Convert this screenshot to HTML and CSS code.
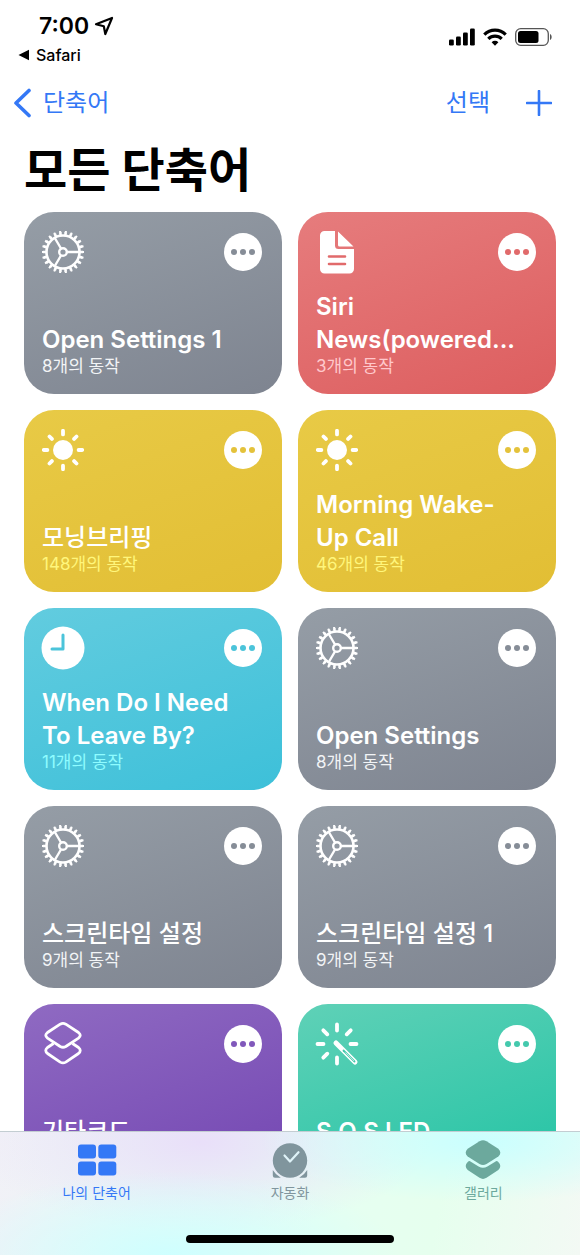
FILE: index.html
```html
<!DOCTYPE html>
<html lang="ko">
<head>
    <meta charset="UTF-8">
    <meta name="viewport" content="width=device-width, initial-scale=1.0">
    <title>모든 단축어</title>
    <link rel="stylesheet" href="styles.css">
</head>
<body>
    <!-- Iconos compartidos -->
    <svg class="sprite" aria-hidden="true">
        <symbol id="gear" viewBox="0 0 42 42">
            <g fill="none" stroke="#fff">
                <circle cx="21" cy="21" r="18.500" stroke-width="3" pathLength="44" stroke-dasharray="1 1" stroke-dashoffset="0.5"/>
                <circle cx="21" cy="21" r="20.300" stroke-width="2" pathLength="44" stroke-dasharray="0.7 1.3" stroke-dashoffset="0.350"/>
                <circle cx="21" cy="21" r="16.500" stroke-width="2.600"/>
                <circle cx="21" cy="21" r="3.800" stroke-width="2.400"/>
                <path d="M25 21h12M19 17.500l-6.500-11M19 24.500l-6.500 11" stroke-width="2.400"/>
            </g>
        </symbol>
        <symbol id="sun" viewBox="0 0 42 42">
            <circle cx="21" cy="21" r="10" fill="#fff"/>
            <path d="M21 1.800v3.600M21 36.600v3.600M1.800 21h3.600M36.600 21h3.600M7.500 7.500l2.400 2.400M32.100 32.100l2.400 2.400M34.500 7.500l-2.400 2.400M9.900 32.100l-2.400 2.400" stroke="#fff" stroke-width="3.800" stroke-linecap="round"/>
        </symbol>
        <symbol id="more" viewBox="0 0 38 38">
            <circle cx="19" cy="19" r="19" fill="#fff"/>
            <g fill="currentColor">
                <circle cx="10" cy="19" r="3"/>
                <circle cx="19" cy="19" r="3"/>
                <circle cx="28" cy="19" r="3"/>
            </g>
        </symbol>
    </svg>

    <div class="app">
        <div class="status">
            <div class="status-left">
                <div class="time">7:00
                    <svg width="20" height="20" viewBox="0 0 20 20"><path d="M2 8.200L18 2 11.300 18 9.800 10.200z" fill="none" stroke="#000" stroke-width="2.200" stroke-linejoin="round"/></svg>
                </div>
                <a class="return" href="#">
                    <svg width="12" height="12" viewBox="0 0 12 12"><path d="M0.500 6L11 0.700v10.600z"/></svg>
                    Safari
                </a>
            </div>
            <div class="status-right">
                <svg width="26" height="18" viewBox="0 0 26 18">
                    <rect x="0" y="11.500" width="4.800" height="6" rx="1.300"/>
                    <rect x="7" y="8.500" width="4.800" height="9" rx="1.300"/>
                    <rect x="14" y="4.500" width="4.800" height="13" rx="1.300"/>
                    <rect x="21" y="0.500" width="4.800" height="17" rx="1.300"/>
                </svg>
                <svg width="24" height="18" viewBox="0 0 24 18">
                    <g fill="none" stroke="#000" stroke-width="3.200">
                        <path d="M1.300 6.600a15.200 15.200 0 0 1 21.400 0"/>
                        <path d="M5.300 10.800a9.500 9.500 0 0 1 13.400 0"/>
                    </g>
                    <path d="M8.600 14.200a4.900 4.900 0 0 1 6.800 0L12 17.700z"/>
                </svg>
                <svg width="38" height="18" viewBox="0 0 38 18">
                    <rect x="0.700" y="0.700" width="32.600" height="16.600" rx="5" fill="none" stroke="#555" stroke-width="1.300"/>
                    <rect x="3" y="3" width="20.500" height="12" rx="2.500"/>
                    <path d="M35 6c2.200 1 2.200 5 0 6z" fill="#555"/>
                </svg>
            </div>
        </div>

        <nav class="nav">
            <a class="back" href="#">
                <svg width="18" height="30" viewBox="0 0 18 30"><path d="M16 2.500L3 15l13 12.500" fill="none" stroke="currentColor" stroke-width="3.600" stroke-linecap="round" stroke-linejoin="round"/></svg>
                단축어
            </a>
            <div class="nav-actions">
                <button type="button">선택</button>
                <button type="button" aria-label="추가">
                    <svg width="26" height="26" viewBox="0 0 26 26"><path d="M13 1v24M1 13h24" stroke="currentColor" stroke-width="2.600" stroke-linecap="round"/></svg>
                </button>
            </div>
        </nav>

        <h1>모든 단축어</h1>

        <main class="grid">
            <article class="card gray">
                <div class="card-top">
                    <svg class="icon"><use href="#gear"/></svg>
                    <button type="button" class="more" aria-label="편집"><svg><use href="#more"/></svg></button>
                </div>
                <div class="card-text">
                    <h2>Open Settings 1</h2>
                    <p>8개의 동작</p>
                </div>
            </article>

            <article class="card red">
                <div class="card-top">
                    <svg class="icon" viewBox="0 0 42 42">
                        <path d="M9 0h10v14.500a3.500 3.500 0 0 0 3.500 3.500H38v20a4.500 4.500 0 0 1-4.500 4.500h-25A4.500 4.500 0 0 1 4 38V4.500A4.500 4.500 0 0 1 8.500 0z" fill="#fff"/>
                        <path d="M22 0.500L37.500 15.500H23.500a1.500 1.500 0 0 1-1.500-1.500z" fill="#fff"/>
                        <path d="M13 25.500h16M13 33h16" stroke="currentColor" stroke-width="2.600" stroke-linecap="round"/>
                    </svg>
                    <button type="button" class="more" aria-label="편집"><svg><use href="#more"/></svg></button>
                </div>
                <div class="card-text">
                    <h2>Siri News(powered...</h2>
                    <p>3개의 동작</p>
                </div>
            </article>

            <article class="card yellow">
                <div class="card-top">
                    <svg class="icon"><use href="#sun"/></svg>
                    <button type="button" class="more" aria-label="편집"><svg><use href="#more"/></svg></button>
                </div>
                <div class="card-text">
                    <h2 class="ko">모닝브리핑</h2>
                    <p>148개의 동작</p>
                </div>
            </article>

            <article class="card yellow">
                <div class="card-top">
                    <svg class="icon"><use href="#sun"/></svg>
                    <button type="button" class="more" aria-label="편집"><svg><use href="#more"/></svg></button>
                </div>
                <div class="card-text">
                    <h2>Morning Wake-Up Call</h2>
                    <p>46개의 동작</p>
                </div>
            </article>

            <article class="card cyan">
                <div class="card-top">
                    <svg class="icon" viewBox="0 0 42 42">
                        <circle cx="21" cy="21" r="21.500" fill="#fff"/>
                        <path d="M21 8v14H10" fill="none" stroke="currentColor" stroke-width="3" stroke-linecap="round" stroke-linejoin="round"/>
                    </svg>
                    <button type="button" class="more" aria-label="편집"><svg><use href="#more"/></svg></button>
                </div>
                <div class="card-text">
                    <h2>When Do I Need To Leave By?</h2>
                    <p>11개의 동작</p>
                </div>
            </article>

            <article class="card gray">
                <div class="card-top">
                    <svg class="icon"><use href="#gear"/></svg>
                    <button type="button" class="more" aria-label="편집"><svg><use href="#more"/></svg></button>
                </div>
                <div class="card-text">
                    <h2>Open Settings</h2>
                    <p>8개의 동작</p>
                </div>
            </article>

            <article class="card gray">
                <div class="card-top">
                    <svg class="icon"><use href="#gear"/></svg>
                    <button type="button" class="more" aria-label="편집"><svg><use href="#more"/></svg></button>
                </div>
                <div class="card-text">
                    <h2 class="ko">스크린타임 설정</h2>
                    <p>9개의 동작</p>
                </div>
            </article>

            <article class="card gray">
                <div class="card-top">
                    <svg class="icon"><use href="#gear"/></svg>
                    <button type="button" class="more" aria-label="편집"><svg><use href="#more"/></svg></button>
                </div>
                <div class="card-text">
                    <h2 class="ko">스크린타임 설정 1</h2>
                    <p>9개의 동작</p>
                </div>
            </article>

            <article class="card purple">
                <div class="card-top">
                    <svg class="icon" viewBox="0 0 42 42">
                        <g fill="none" stroke="#fff" stroke-width="2.800" stroke-linejoin="round">
                            <path d="M18.200 1.200Q21 -0.400 23.800 1.200L36.500 9.500Q40 12.300 36.500 15.200L23.800 23.500Q21 25 18.200 23.500L5.500 15.200Q2 12.300 5.500 9.500z"/>
                            <path d="M11.500 20.500L5.500 24.500Q2 27.500 5.500 30.500L18.200 39.100Q21 40.700 23.800 39.100L36.500 30.500Q40 27.500 36.500 24.500L30.500 20.500"/>
                        </g>
                    </svg>
                    <button type="button" class="more" aria-label="편집"><svg><use href="#more"/></svg></button>
                </div>
                <div class="card-text">
                    <h2 class="ko">기타코드</h2>
                </div>
            </article>

            <article class="card green">
                <div class="card-top">
                    <svg class="icon" viewBox="0 0 42 42">
                        <path d="M21 1.500v6M21 34.500v6M1.500 21h6M34.500 21h6M7.300 7.300l4 4M34.700 7.300l-4 4M11.300 30.700l-4 4" stroke="#fff" stroke-width="3.800" stroke-linecap="round"/>
                        <path d="M20 20L39 39" stroke="#fff" stroke-width="5" stroke-linecap="round"/>
                        <path d="M27.500 27.500L38.500 38.500" stroke="currentColor" stroke-width="1.800" stroke-linecap="round"/>
                        <path d="M29.500 29.500L38 38" stroke="#fff" stroke-width="0.600"/>
                    </svg>
                    <button type="button" class="more" aria-label="편집"><svg><use href="#more"/></svg></button>
                </div>
                <div class="card-text">
                    <h2>S.O.S LED</h2>
                </div>
            </article>
        </main>

        <footer class="tabbar">
            <nav class="tabs">
                <a class="tab active" href="#">
                    <svg width="40" height="40" viewBox="0 0 40 40">
                        <rect x="1" y="4.500" width="18" height="14" rx="3"/>
                        <rect x="21.300" y="4.500" width="18" height="14" rx="3"/>
                        <rect x="1" y="21.500" width="18" height="14" rx="3"/>
                        <rect x="21.300" y="21.500" width="18" height="14" rx="3"/>
                    </svg>
                    나의 단축어
                </a>
                <a class="tab auto" href="#">
                    <svg width="40" height="40" viewBox="0 0 40 40">
                        <circle cx="20" cy="20.500" r="17.200"/>
                        <path d="M2.800 30q3 5 8 7.800H5q-2.200 0-2.200-2.200zM37.200 30q-3 5-8 7.800H35q2.200 0 2.200-2.200z"/>
                        <path d="M14.500 15.500l5.500 6 8.500-9.300" fill="none" stroke="#dff3f8" stroke-width="2.200" stroke-linecap="round" stroke-linejoin="round"/>
                    </svg>
                    자동화
                </a>
                <a class="tab gallery" href="#">
                    <svg width="40" height="40" viewBox="0 0 40 40">
                        <path d="M16.500 1.200Q20-0.800 23.500 1.200L35.300 8.800Q39.300 12.800 35.300 16.500L23.500 24Q20 26 16.500 24L4.700 16.500Q0.700 12.800 4.700 8.800z"/>
                        <path d="M7 21.200L15.600 26.600Q20 29 24.400 26.600L33 21.200Q34 20.700 35.300 22Q39.300 26 35.300 30L23.500 37.800Q20 40 16.500 37.800L4.700 30Q0.700 26 4.700 22Q6 20.700 7 21.200z"/>
                    </svg>
                    갤러리
                </a>
            </nav>
            <div class="home-bar"></div>
        </footer>
    </div>
</body>
</html>
```
FILE: styles.css
```css
* { box-sizing: border-box; }
body { margin: 0; background: #fff; color: #000; font-family: Inter, "Noto Sans CJK KR", sans-serif; }
h1, h2, p { margin: 0; }
a { color: inherit; text-decoration: none; }
button { padding: 0; border: 0; background: none; color: inherit; font: inherit; cursor: pointer; }
svg { display: block; flex: none; }
.sprite { position: absolute; width: 0; height: 0; }

.app { display: flex; flex-direction: column; height: 100vh; }

/* Barra de estado */
.status { display: flex; justify-content: space-between; padding: 11px 27px 0 18px; }
.time { display: flex; align-items: center; gap: 5px; padding-left: 21px; font-size: 23px; font-weight: 600; line-height: 30px; }
.return { display: flex; align-items: center; gap: 6px; font-size: 16px; font-weight: 500; line-height: 28px; }
.status-right { display: flex; gap: 8px; padding-top: 17px; }

/* Navegación */
.nav { display: flex; align-items: center; justify-content: space-between; margin-top: 14px; padding: 0 28px 0 13px; color: #3478f6; font-size: 24px; line-height: 40px; }
.back { display: flex; align-items: center; gap: 12px; }
.nav-actions { display: flex; align-items: center; gap: 36px; }
h1 { padding: 15px 24px 10px; font-size: 47px; font-weight: 700; line-height: 64px; }

/* Tarjetas */
.grid { flex: 1; min-height: 0; overflow: hidden; display: grid; grid-template-columns: 1fr 1fr; grid-auto-rows: 182px; gap: 16px; padding: 0 24px; }
.card { display: flex; flex-direction: column; justify-content: space-between; padding: 19px 20px 18px 18px; border-radius: 30px; }
.card-top { display: flex; align-items: center; justify-content: space-between; }
.icon { width: 42px; height: 42px; overflow: visible; }
.more, .more svg { width: 38px; height: 38px; }
.card-text { padding-right: 14px; color: #fff; }
.card h2 { font-size: 24px; font-weight: 600; line-height: 33px; }
.card .ko { font-weight: 500; }
.card p { color: var(--sub); font-size: 17px; line-height: 20px; }
.gray { background: linear-gradient(160deg, #959da6, #7e8490); color: #868d97; --sub: #f2f4f6; }
.red { background: linear-gradient(160deg, #e67c7d, #dd5e5f); color: #e16a6b; --sub: #ffc8cc; }
.yellow { background: linear-gradient(160deg, #e8ca46, #e2be34); color: #e4c23b; --sub: #fff67c; }
.cyan { background: linear-gradient(160deg, #62ccdf, #3dc0d9); color: #4bc4da; --sub: #8ffcff; }
.purple { background: linear-gradient(160deg, #8f6ac2, #7346b2); color: #8158bb; }
.green { background: linear-gradient(160deg, #5fd1b7, #22c3a4); color: #44c9ad; }
.purple .card-text, .green .card-text { padding-bottom: 20px; }

/* Barra inferior */
.tabbar {
    border-top: 1px solid #c3cdd2;
    background:
        radial-gradient(ellipse 220px 60px at 480px 10px, #caffff, transparent),
        radial-gradient(ellipse 230px 85px at 170px 124px, #ceffff, transparent),
        radial-gradient(ellipse 230px 90px at 200px 10px, #e9dff9, transparent),
        linear-gradient(100deg, #f1f1f7, #e6fff2 55%, #e6ffee 75%, #f3f9f4);
}
.tabs { display: grid; grid-template-columns: repeat(3, 1fr); padding-top: 8px; }
.tab { display: flex; flex-direction: column; align-items: center; color: #80959d; fill: currentColor; font-size: 14px; line-height: 26px; }
.active { color: #3478f6; }
.gallery { color: #6ca99d; }
.home-bar { width: 36%; height: 8px; margin: 29px auto 12px; border-radius: 4px; background: #000; }
```
